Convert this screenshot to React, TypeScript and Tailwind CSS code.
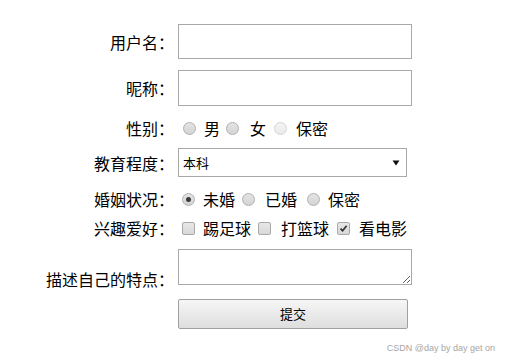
import React from "react";

const cjk = { fontFamily: '"Noto Sans CJK SC", "Microsoft YaHei", sans-serif' };

function Radio({ checked = false, light = false }: { checked?: boolean; light?: boolean }) {
  return (
    <span
      className={
        "flex items-center justify-center w-[13px] h-[13px] rounded-full border shrink-0 " +
        (light
          ? "border-[#d4d4d4] bg-gradient-to-b from-[#f4f4f4] to-[#ebebeb]"
          : "border-[#b0b0b0] bg-gradient-to-b from-[#e4e4e4] to-[#d4d4d4]")
      }
    >
      {checked && <span className="w-[5px] h-[5px] rounded-full bg-[#3a3a3a]" />}
    </span>
  );
}

function Check({ checked = false }: { checked?: boolean }) {
  return (
    <span className="flex items-center justify-center w-[13px] h-[13px] rounded-[2px] border border-[#a8a8a8] bg-gradient-to-b from-[#e8e8e8] to-[#d8d8d8] shrink-0">
      {checked && (
        <svg width="9" height="9" viewBox="0 0 9 9">
          <path d="M1.5 4.6 L3.6 6.8 L7.6 1.8" fill="none" stroke="#333" strokeWidth="1.7" />
        </svg>
      )}
    </span>
  );
}

function Label({ children, className = "" }: { children: React.ReactNode; className?: string }) {
  return (
    <div
      className={
        "w-[134px] mr-[4px] shrink-0 text-right whitespace-nowrap text-[16px] leading-[22px] text-black [text-spacing-trim:space-all] " +
        className
      }
    >
      {children}
    </div>
  );
}

export default function App() {
  return (
    <div className="relative w-[514px] h-[363px] bg-white overflow-hidden" style={cjk}>
      <div className="flex flex-col pl-[40px] pt-[24px]">
        {/* 用户名 */}
        <div className="flex items-center h-[35px]">
          <Label>用户名：</Label>
          <input className="w-[234px] h-[35px] border border-[#a9a9a9] outline-none" />
        </div>
        {/* 昵称 */}
        <div className="flex items-center h-[36px] mt-[11px]">
          <Label>昵称：</Label>
          <input className="w-[234px] h-[36px] border border-[#a9a9a9] outline-none" />
        </div>
        {/* 性别 */}
        <div className="flex items-center h-[22px] mt-[11px] text-[16px] leading-[22px]">
          <Label>性别：</Label>
          <span className="ml-[5px]"><Radio /></span>
          <span className="ml-[8px]">男</span>
          <span className="ml-[6px]"><Radio /></span>
          <span className="ml-[11px]">女</span>
          <span className="ml-[8px]"><Radio light /></span>
          <span className="ml-[9px]">保密</span>
        </div>
        {/* 教育程度 */}
        <div className="flex items-center h-[29px] mt-[9px]">
          <Label>教育程度：</Label>
          <div className="w-[229px] h-[29px] border border-[#a9a9a9] flex items-center justify-between pl-[4px] pr-[6px] text-[13px] text-black">
            <span>本科</span>
            <svg width="8" height="6" viewBox="0 0 8 6">
              <path d="M0.5 0.5 H7.5 L4 5.5 Z" fill="#111" />
            </svg>
          </div>
        </div>
        {/* 婚姻状况 */}
        <div className="flex items-center h-[22px] mt-[11px] text-[16px] leading-[22px]">
          <Label>婚姻状况：</Label>
          <span className="ml-[4px]"><Radio checked /></span>
          <span className="ml-[8px]">未婚</span>
          <span className="ml-[7px]"><Radio /></span>
          <span className="ml-[10px]">已婚</span>
          <span className="ml-[10px]"><Radio /></span>
          <span className="ml-[8px]">保密</span>
        </div>
        {/* 兴趣爱好 */}
        <div className="flex items-center h-[22px] mt-[7px] text-[16px] leading-[22px]">
          <Label>兴趣爱好：</Label>
          <span className="ml-[4px]"><Check /></span>
          <span className="ml-[8px]">踢足球</span>
          <span className="ml-[7px]"><Check /></span>
          <span className="ml-[10px]">打篮球</span>
          <span className="ml-[8px]"><Check checked /></span>
          <span className="ml-[9px]">看电影</span>
        </div>
        {/* 描述 */}
        <div className="flex items-end mt-[10px]">
          <Label className="mb-[-5px]">描述自己的特点：</Label>
          <textarea className="block w-[234px] h-[36px] border border-[#a9a9a9] outline-none" />
        </div>
        {/* 提交 */}
        <div className="flex mt-[14px]">
          <div className="w-[138px] shrink-0" />
          <button className="w-[230px] h-[30px] border border-[#a0a0a0] rounded-[2px] bg-gradient-to-b from-[#f6f6f6] to-[#dedede] text-[13px] text-black flex items-center justify-center">
            提交
          </button>
        </div>
      </div>
      <div
        className="absolute right-[19px] bottom-[9px] text-[9px] leading-[11px] text-[#a6a6a6]"
        style={{ fontFamily: '"Liberation Sans", Arial, sans-serif' }}
      >
        CSDN @day by day get on
      </div>
    </div>
  );
}
